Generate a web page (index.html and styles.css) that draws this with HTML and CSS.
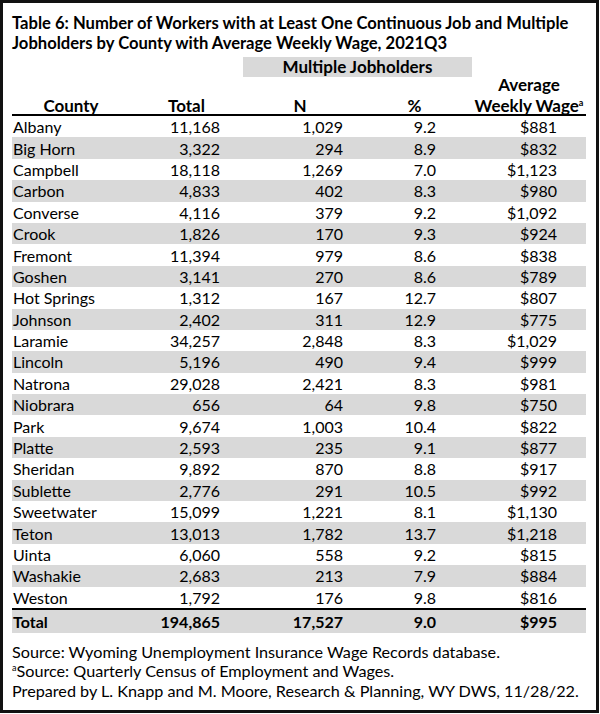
FILE: index.html
```html
<!DOCTYPE html>
<html>
<head>
<meta charset="utf-8">
<link rel="stylesheet" href="styles.css">
</head>
<body>
<div class="card">
  <h1 class="title"><span class="tline">Table 6: Number of Workers with at Least One Continuous Job and Multiple</span><span class="tline">Jobholders by County with Average Weekly Wage, 2021Q3</span></h1>
  <table class="data">
    <colgroup>
      <col class="c-county"><col class="c-total"><col class="c-n"><col class="c-pct"><col class="c-wage">
    </colgroup>
    <thead>
      <tr class="group">
        <th></th><th></th><th colspan="2" class="band">Multiple Jobholders</th><th rowspan="2" class="wage-head"><span class="hline first">Average</span><span class="hline">Weekly Wage<sup>a</sup></span></th>
      </tr>
      <tr class="cols">
        <th>County</th><th>Total</th><th>N</th><th>%</th>
      </tr>
    </thead>
    <tbody>
      <tr><td>Albany</td><td>11,168</td><td>1,029</td><td>9.2</td><td>$881</td></tr>
      <tr><td>Big Horn</td><td>3,322</td><td>294</td><td>8.9</td><td>$832</td></tr>
      <tr><td>Campbell</td><td>18,118</td><td>1,269</td><td>7.0</td><td>$1,123</td></tr>
      <tr><td>Carbon</td><td>4,833</td><td>402</td><td>8.3</td><td>$980</td></tr>
      <tr><td>Converse</td><td>4,116</td><td>379</td><td>9.2</td><td>$1,092</td></tr>
      <tr><td>Crook</td><td>1,826</td><td>170</td><td>9.3</td><td>$924</td></tr>
      <tr><td>Fremont</td><td>11,394</td><td>979</td><td>8.6</td><td>$838</td></tr>
      <tr><td>Goshen</td><td>3,141</td><td>270</td><td>8.6</td><td>$789</td></tr>
      <tr><td>Hot Springs</td><td>1,312</td><td>167</td><td>12.7</td><td>$807</td></tr>
      <tr><td>Johnson</td><td>2,402</td><td>311</td><td>12.9</td><td>$775</td></tr>
      <tr><td>Laramie</td><td>34,257</td><td>2,848</td><td>8.3</td><td>$1,029</td></tr>
      <tr><td>Lincoln</td><td>5,196</td><td>490</td><td>9.4</td><td>$999</td></tr>
      <tr><td>Natrona</td><td>29,028</td><td>2,421</td><td>8.3</td><td>$981</td></tr>
      <tr><td>Niobrara</td><td>656</td><td>64</td><td>9.8</td><td>$750</td></tr>
      <tr><td>Park</td><td>9,674</td><td>1,003</td><td>10.4</td><td>$822</td></tr>
      <tr><td>Platte</td><td>2,593</td><td>235</td><td>9.1</td><td>$877</td></tr>
      <tr><td>Sheridan</td><td>9,892</td><td>870</td><td>8.8</td><td>$917</td></tr>
      <tr><td>Sublette</td><td>2,776</td><td>291</td><td>10.5</td><td>$992</td></tr>
      <tr><td>Sweetwater</td><td>15,099</td><td>1,221</td><td>8.1</td><td>$1,130</td></tr>
      <tr><td>Teton</td><td>13,013</td><td>1,782</td><td>13.7</td><td>$1,218</td></tr>
      <tr><td>Uinta</td><td>6,060</td><td>558</td><td>9.2</td><td>$815</td></tr>
      <tr><td>Washakie</td><td>2,683</td><td>213</td><td>7.9</td><td>$884</td></tr>
      <tr><td>Weston</td><td>1,792</td><td>176</td><td>9.8</td><td>$816</td></tr>
    </tbody>
    <tfoot>
      <tr class="total"><td>Total</td><td>194,865</td><td>17,527</td><td>9.0</td><td>$995</td></tr>
    </tfoot>
  </table>
  <div class="notes">
    <p>Source: Wyoming Unemployment Insurance Wage Records database.</p>
    <p><sup>a</sup>Source: Quarterly Census of Employment and Wages.</p>
    <p>Prepared by L. Knapp and M. Moore, Research &amp; Planning, WY DWS, 11/28/22.</p>
  </div>
</div>
</body>
</html>
```

FILE: styles.css
```css
html, body {
  margin: 0;
  padding: 0;
  background: #ffffff;
}

body {
  font-family: Lato, "Liberation Sans", sans-serif;
  color: #000;
}

.card {
  box-sizing: border-box;
  width: 599px;
  height: 713px;
  border: 3px solid #111;
  padding: 10px 10px 0 9px;
}

.title {
  margin: 0 0 4px 0;
  font-size: 16.6px;
  line-height: 20px;
  font-weight: 700;
  letter-spacing: 0;
}

.tline {
  display: block;
  height: 20px;
}

.data {
  border-collapse: collapse;
  width: 574px;
  table-layout: fixed;
  font-size: 16px;
}

.c-county { width: 118px; }
.c-total { width: 113px; }
.c-n { width: 114px; }
.c-pct { width: 115px; }
.c-wage { width: 114px; }

.data th {
  font-weight: 700;
  font-size: 17px;
  padding: 0;
  text-align: center;
  line-height: 17px;
}

.hline {
  display: block;
  line-height: 17px;
}

.hline.first {
  line-height: 24px;
}

.group th {
  height: 20px;
  line-height: 20px;
  vertical-align: middle;
}

.band {
  background: #d9d9d9;
}

.cols th {
  height: 38px;
  box-sizing: border-box;
  vertical-align: bottom;
  padding: 0;
  border-bottom: 2px solid #000;
}

.data th.wage-head {
  vertical-align: bottom;
  border-bottom: 2px solid #000;
  padding: 0;
}

sup {
  font-size: 9px;
  line-height: 0;
  vertical-align: 6px;
}

.data td {
  padding: 0;
  height: 21.4px;
  line-height: 21px;
  text-align: right;
}

.data td:nth-child(1) { text-align: left; padding-left: 1px; }
.data td:nth-child(2) { padding-right: 23px; }
.data td:nth-child(3) { padding-right: 14px; }
.data td:nth-child(4) { padding-right: 36px; }
.data td:nth-child(5) { padding-right: 29px; }

.data tbody tr:nth-child(even) td {
  background: #d9d9d9;
}

.total td {
  font-weight: 700;
  background: #d9d9d9;
  border-top: 2px solid #000;
  height: 23px;
}

.notes {
  margin-top: 9px;
  font-size: 16.2px;
  line-height: 19.5px;
}

.notes p {
  margin: 0;
}
```
